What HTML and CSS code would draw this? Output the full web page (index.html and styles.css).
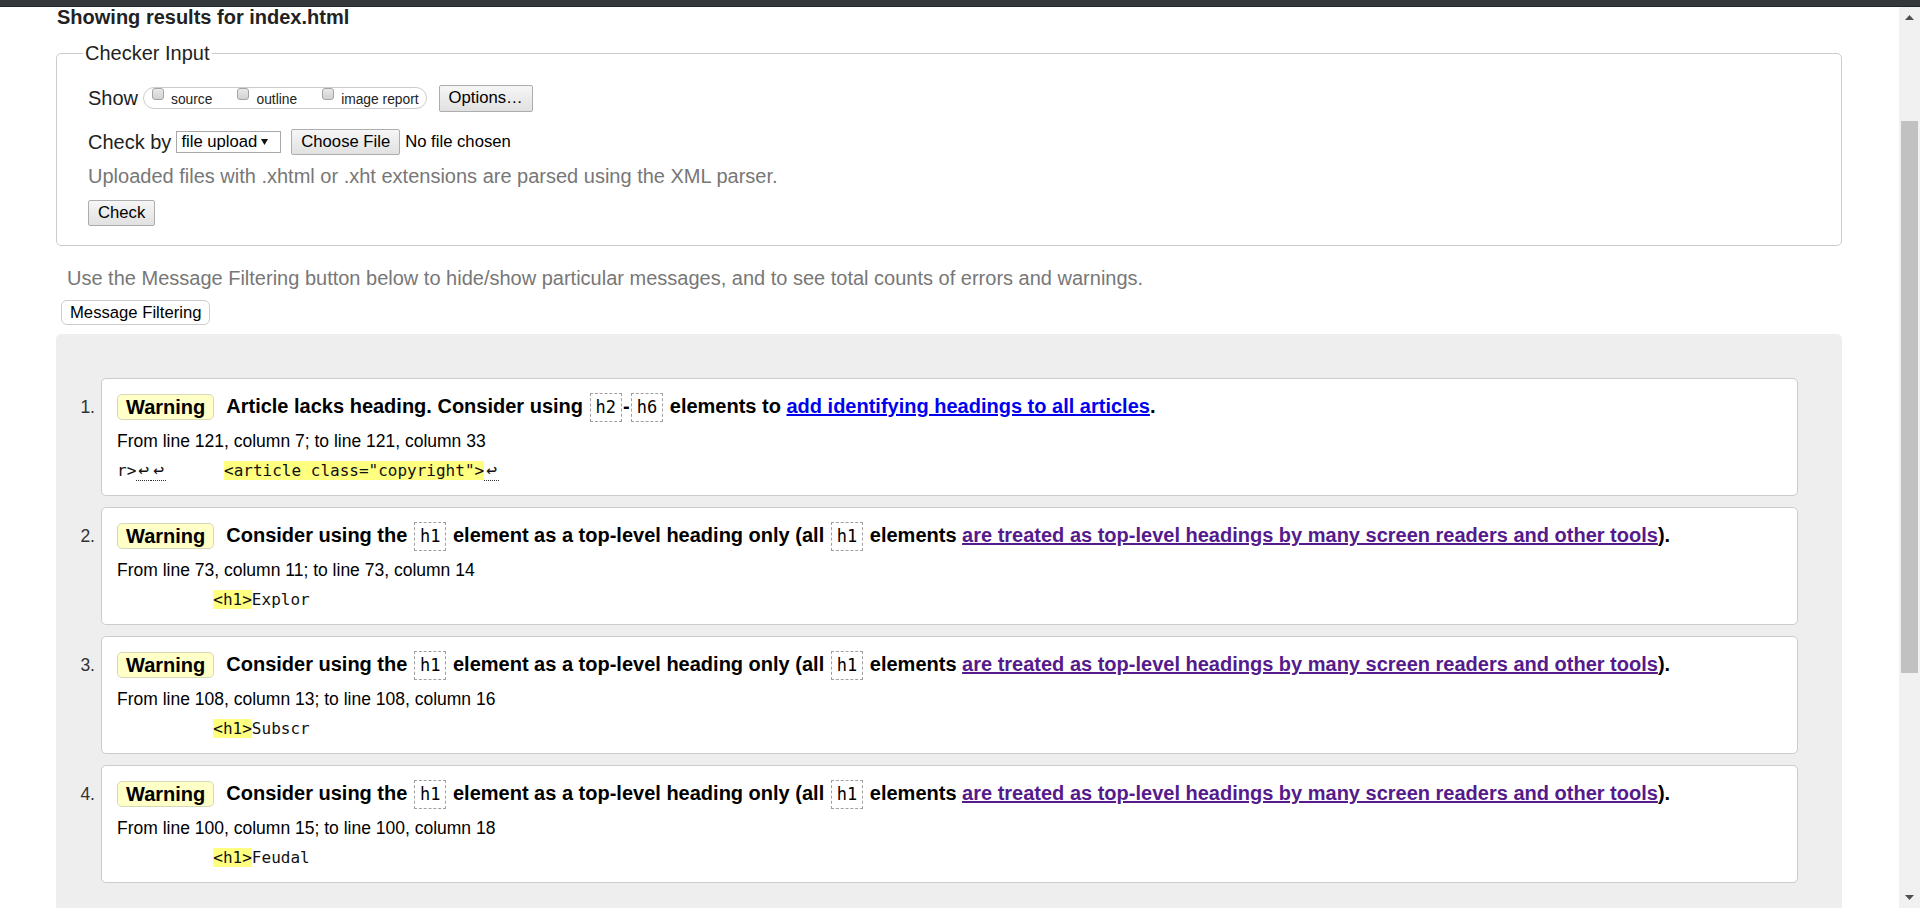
FILE: index.html
```html
<!DOCTYPE html>
<html lang="en">
<head>
<meta charset="utf-8">
<title>Showing results for index.html - Nu Html Checker</title>
<link rel="stylesheet" href="styles.css">
</head>
<body>
<div class="topbar"></div>
<div class="viewport">
  <main class="page">
    <h2 class="results-title">Showing results for index.html</h2>

    <fieldset class="checker">
      <legend>Checker Input</legend>
      <div class="row row-show">
        <span class="row-label">Show</span>
        <span class="opts">
          <span class="opt"><span class="cb"></span><span class="opt-label">source</span></span>
          <span class="opt"><span class="cb"></span><span class="opt-label">outline</span></span>
          <span class="opt"><span class="cb"></span><span class="opt-label">image report</span></span>
        </span>
        <button class="btn btn-options" type="button">Options…</button>
      </div>
      <div class="row row-by">
        <span class="row-label">Check by</span>
        <span class="select">file upload<svg class="caret" width="7" height="6" viewBox="0 0 7 6"><polygon points="0,0 7,0 3.5,6" fill="#111"/></svg></span>
        <button class="btn btn-choose" type="button">Choose File</button>
        <span class="nofile">No file chosen</span>
      </div>
      <p class="hint">Uploaded files with .xhtml or .xht extensions are parsed using the XML parser.</p>
      <div class="row row-check"><button class="btn" type="button">Check</button></div>
    </fieldset>

    <p class="filter-hint">Use the Message Filtering button below to hide/show particular messages, and to see total counts of errors and warnings.</p>
    <button class="btn-filter" type="button">Message Filtering</button>

    <section class="results">
      <ol class="messages">
        <li class="msg">
          <span class="num">1.</span>
          <div class="card">
            <div class="msg-head">
              <span class="badge">Warning</span>
              <span class="msg-text">Article lacks heading. Consider using <code>h2</code>-<code>h6</code> elements to <a class="link" href="#">add identifying headings to all articles</a>.</span>
            </div>
            <p class="loc">From line 121, column 7; to line 121, column 33</p>
            <p class="extract">r&gt;<span class="lf">↩</span><span class="lf">↩</span>      <mark>&lt;article class="copyright"&gt;</mark><span class="lf">↩</span></p>
          </div>
        </li>
        <li class="msg">
          <span class="num">2.</span>
          <div class="card">
            <div class="msg-head">
              <span class="badge">Warning</span>
              <span class="msg-text">Consider using the <code>h1</code> element as a top-level heading only (all <code>h1</code> elements <a class="link visited" href="#">are treated as top-level headings by many screen readers and other tools</a>).</span>
            </div>
            <p class="loc">From line 73, column 11; to line 73, column 14</p>
            <p class="extract">          <mark>&lt;h1&gt;</mark>Explor</p>
          </div>
        </li>
        <li class="msg">
          <span class="num">3.</span>
          <div class="card">
            <div class="msg-head">
              <span class="badge">Warning</span>
              <span class="msg-text">Consider using the <code>h1</code> element as a top-level heading only (all <code>h1</code> elements <a class="link visited" href="#">are treated as top-level headings by many screen readers and other tools</a>).</span>
            </div>
            <p class="loc">From line 108, column 13; to line 108, column 16</p>
            <p class="extract">          <mark>&lt;h1&gt;</mark>Subscr</p>
          </div>
        </li>
        <li class="msg">
          <span class="num">4.</span>
          <div class="card">
            <div class="msg-head">
              <span class="badge">Warning</span>
              <span class="msg-text">Consider using the <code>h1</code> element as a top-level heading only (all <code>h1</code> elements <a class="link visited" href="#">are treated as top-level headings by many screen readers and other tools</a>).</span>
            </div>
            <p class="loc">From line 100, column 15; to line 100, column 18</p>
            <p class="extract">          <mark>&lt;h1&gt;</mark>Feudal</p>
          </div>
        </li>
      </ol>
    </section>
  </main>

  <div class="scrollbar" aria-hidden="true">
    <span class="sb-arrow"><svg width="9" height="5" viewBox="0 0 9 5"><polygon points="0,5 9,5 4.5,0" fill="#505050"/></svg></span>
    <span class="sb-thumb"></span>
    <span class="sb-space"></span>
    <span class="sb-arrow"><svg width="9" height="5" viewBox="0 0 9 5"><polygon points="0,0 9,0 4.5,5" fill="#505050"/></svg></span>
  </div>
</div>
</body>
</html>
```

FILE: styles.css
```css
* { box-sizing: border-box; }

html, body {
  margin: 0;
  height: 908px;
  overflow: hidden;
}

body {
  font-family: "Liberation Sans", Arial, sans-serif;
  color: #000;
  background: #fff;
}

.topbar {
  height: 7px;
  background: #35383b;
  border-bottom: 1px solid #222426;
}

.viewport {
  display: flex;
  height: 901px;
}

.page {
  flex: 1;
  min-width: 0;
  overflow: hidden;
  padding: 0 57px 0 56px;
}

.results-title {
  margin: 0;
  padding-left: 1px;
  font-size: 20px;
  line-height: 20px;
  font-weight: bold;
  color: #222;
}

/* Checker input fieldset */
.checker {
  margin: 14px 0 0;
  padding: 18px 30px 19px 31px;
  border: 1px solid #ccc;
  border-radius: 5px;
  min-width: 0;
}

.checker legend {
  margin-left: -5px;
  padding: 0 2px;
  font-size: 20px;
  line-height: 24px;
  color: #222;
}

.row {
  display: flex;
  align-items: center;
}

.row-show { height: 30px; }
.row-by { height: 30px; margin-top: 14px; }
.row-check { height: 26px; margin-top: 12px; }

.row-label {
  font-size: 20px;
  line-height: 24px;
  color: #222;
}

.opts {
  display: flex;
  align-items: flex-start;
  height: 22px;
  margin-left: 5px;
  padding: 0 7px 0 8px;
  border: 1px solid #ccc;
  border-radius: 11px;
}

.opt {
  display: flex;
  align-items: flex-start;
}

.opt + .opt { margin-left: 25px; }

.cb {
  width: 12px;
  height: 12px;
  border: 1px solid #a4a4a4;
  border-radius: 3px;
  background: linear-gradient(#e9e9e9, #d2d2d2);
}

.opt-label {
  margin-left: 7px;
  margin-top: 2px;
  font-size: 13.8px;
  line-height: 20px;
  color: #222;
}

.btn {
  height: 26px;
  padding: 0 9px;
  border: 1px solid #adadad;
  border-radius: 2px;
  background: linear-gradient(#f6f6f6, #e1e1e1);
  font-family: "Liberation Sans", Arial, sans-serif;
  font-size: 16.67px;
  color: #000;
}

.btn-options {
  height: 27px;
  margin-left: 12px;
}

.select {
  display: flex;
  align-items: center;
  height: 22px;
  margin-left: 5px;
  padding: 0 12px 0 4px;
  border: 1px solid #a9a9a9;
  background: #fff;
  font-size: 16.67px;
  color: #000;
}

.caret { margin-left: 4px; }

.btn-choose { margin-left: 10px; }

.nofile {
  margin-left: 5px;
  font-size: 16.67px;
  color: #000;
}

.hint {
  margin: 7px 0 0;
  font-size: 20px;
  line-height: 24px;
  color: #777;
}

/* Filtering */
.filter-hint {
  margin: 20px 0 0;
  padding-left: 11px;
  font-size: 20px;
  line-height: 24px;
  color: #777;
}

.btn-filter {
  display: block;
  margin: 10px 0 0 5px;
  height: 25px;
  padding: 0 8px;
  border: 1px solid #ccc;
  border-radius: 6px;
  background: #fff;
  font-family: "Liberation Sans", Arial, sans-serif;
  font-size: 16.67px;
  color: #000;
}

/* Results */
.results {
  margin-top: 9px;
  padding: 44px 44px 40px 0;
  background: #eee;
  border-radius: 5px 5px 0 0;
}

.messages {
  list-style: none;
  margin: 0;
  padding: 0;
}

.msg { display: flex; }
.msg + .msg { margin-top: 11px; }

.num {
  flex: none;
  width: 45px;
  padding: 15px 6px 0 0;
  text-align: right;
  font-size: 17.5px;
  line-height: 28px;
  color: #333;
}

.card {
  flex: 1;
  min-width: 0;
  background: #fff;
  border: 1px solid #ccc;
  border-radius: 5px;
  padding: 14px 16px 14px 15px;
}

.msg-head {
  display: flex;
  align-items: center;
  height: 28px;
}

.badge {
  flex: none;
  height: 26px;
  padding: 0 8px;
  border: 1px solid #d8d8b8;
  border-radius: 5px;
  background: #ffffc8;
  font-weight: bold;
  font-size: 20px;
  line-height: 24px;
  color: #000;
}

.msg-text {
  margin-left: 12px;
  font-weight: bold;
  font-size: 20px;
  line-height: 28px;
  white-space: nowrap;
}

.msg-text code {
  display: inline-block;
  margin: 0 1px;
  padding: 0 5px;
  border: 1px dashed #a0a0a0;
  font-family: "DejaVu Sans Mono", "Liberation Mono", monospace;
  font-weight: normal;
  font-size: 17px;
  line-height: 27px;
}

.link {
  color: #0000ee;
  text-decoration: underline;
}

.link.visited { color: #551a8b; }

.loc {
  margin: 10px 0 0;
  font-size: 17.5px;
  line-height: 20px;
  color: #000;
}

.extract {
  margin: 9px 0 0;
  font-family: "DejaVu Sans Mono", "Liberation Mono", monospace;
  font-size: 16px;
  line-height: 21px;
  white-space: pre;
  color: #111;
}

.extract mark {
  background: #ffff80;
  color: inherit;
}

.lf {
  display: inline-block;
  width: 15px;
  text-align: center;
  border-bottom: 1px dotted #333;
  font-size: 18px;
  line-height: 20px;
}

/* Fake scrollbar */
.scrollbar {
  flex: none;
  width: 21px;
  display: flex;
  flex-direction: column;
  align-items: center;
  background: #f1f1f1;
}

.sb-arrow {
  height: 21px;
  display: flex;
  align-items: center;
  justify-content: center;
}

.sb-thumb {
  width: 17px;
  height: 552px;
  margin-top: 93px;
  background: #c1c1c1;
}

.sb-space { flex: 1; }
```
